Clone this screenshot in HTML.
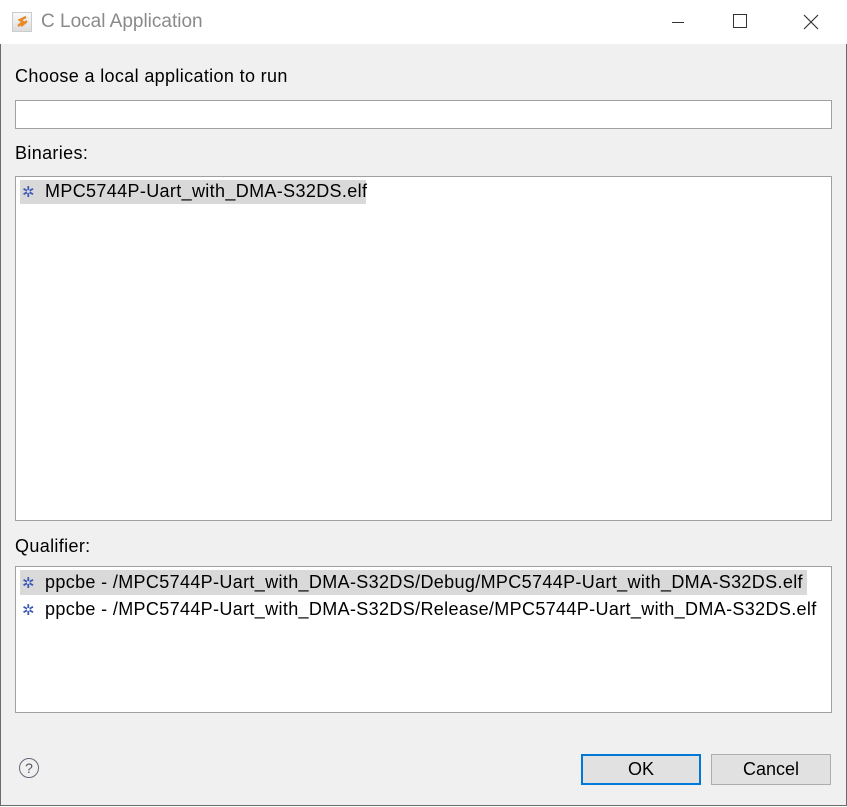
<!DOCTYPE html>
<html><head><style>
body{margin:0;width:847px;height:807px;overflow:hidden;font-family:"Liberation Sans",sans-serif;color:#000;}
.win{position:absolute;left:0;top:0;width:845px;height:805px;border:1px solid #6b6b6b;border-top:none;background:#f0f0f0;}
.title{position:absolute;left:0;top:0;width:847px;height:44px;background:#fff;}
.abs{position:absolute;white-space:nowrap;}
.box{position:absolute;background:#fff;border:1px solid #a0a0a0;box-sizing:border-box;}
.t{font-size:18px;letter-spacing:0.35px;}
.sel{position:absolute;background:#d9d9d9;}
.btn{position:absolute;background:#e1e1e1;border:1px solid #adadad;box-sizing:border-box;font-size:18px;text-align:center;line-height:28px;}
</style></head><body>
<div class="win"></div>
<div class="title">
 <div class="abs" style="left:12px;top:12px;width:20px;height:20px;background:linear-gradient(#fafafa,#ddd);border:1px solid #ccc;box-sizing:border-box"></div>
 <svg class="abs" style="left:15px;top:14px" width="15" height="15"><path d="M3 12 L8 8 L5 6 L11 3 M6 12 L12 7" stroke="#e8892a" stroke-width="2.5" fill="none"/></svg>
 <div class="abs" style="left:41px;top:11px;font-size:19px;color:#8a8a8a">C Local Application</div>
 <div class="abs" style="left:672px;top:22px;width:12px;height:1px;background:#333"></div>
 <div class="abs" style="left:733px;top:14px;width:14px;height:14px;border:1px solid #333;box-sizing:border-box"></div>
 <svg class="abs" style="left:803px;top:14px" width="16" height="16"><path d="M1 1L15 15M15 1L1 15" stroke="#333" stroke-width="1.2"/></svg>
</div>
<div class="abs t" style="left:15px;top:66px">Choose a local application to run</div>
<div class="box" style="left:15px;top:100px;width:817px;height:29px"></div>
<div class="abs t" style="left:15px;top:143px">Binaries:</div>
<div class="box" style="left:15px;top:176px;width:817px;height:345px"></div>
<div class="sel" style="left:20px;top:180px;width:346px;height:24px"></div>
<div class="abs" style="left:22px;top:183px;font-size:15px;color:#3a57b5">✲</div>
<div class="abs t" style="left:45px;top:181px">MPC5744P-Uart_with_DMA-S32DS.elf</div>
<div class="abs t" style="left:15px;top:536px">Qualifier:</div>
<div class="box" style="left:15px;top:566px;width:817px;height:147px"></div>
<div class="sel" style="left:20px;top:570px;width:787px;height:25px"></div>
<div class="abs" style="left:22px;top:574px;font-size:15px;color:#3a57b5">✲</div>
<div class="abs t" style="left:45px;top:572px">ppcbe - /MPC5744P-Uart_with_DMA-S32DS/Debug/MPC5744P-Uart_with_DMA-S32DS.elf</div>
<div class="abs" style="left:22px;top:601px;font-size:15px;color:#3a57b5">✲</div>
<div class="abs t" style="left:45px;top:599px">ppcbe - /MPC5744P-Uart_with_DMA-S32DS/Release/MPC5744P-Uart_with_DMA-S32DS.elf</div>
<div class="abs" style="left:19px;top:758px;width:20px;height:20px;border:1px solid #667;border-radius:50%;box-sizing:border-box;font-size:14px;text-align:center;line-height:18px;color:#556">?</div>
<div class="btn" style="left:581px;top:754px;width:120px;height:31px;border:2px solid #0078d7;line-height:27px">OK</div>
<div class="btn" style="left:711px;top:754px;width:120px;height:31px">Cancel</div>
</body></html>
